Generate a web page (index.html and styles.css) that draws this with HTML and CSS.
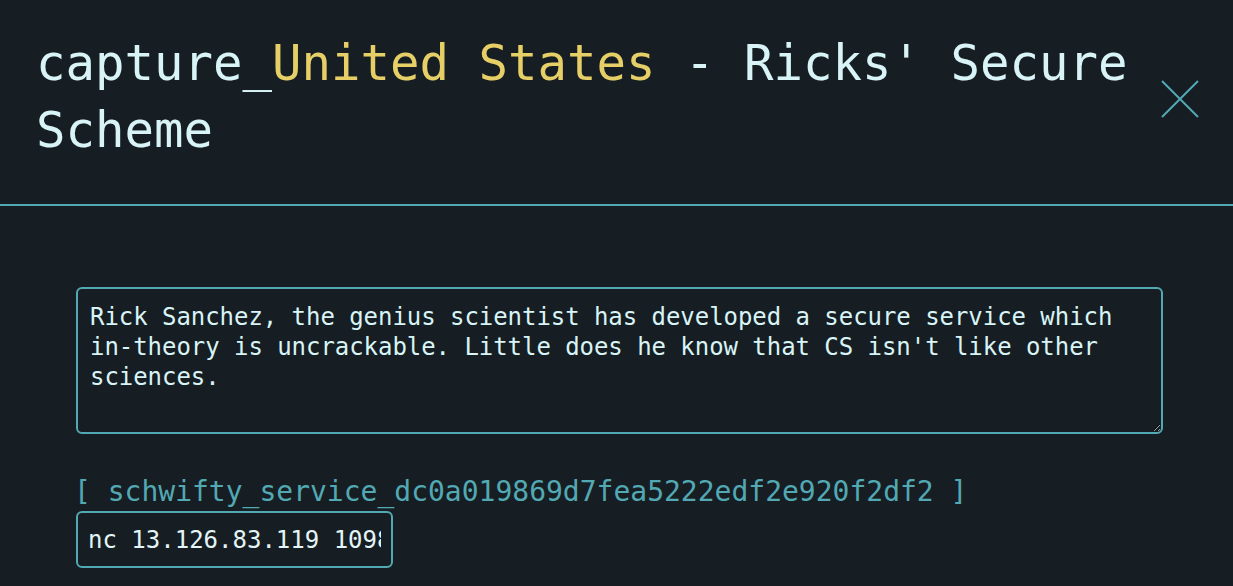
FILE: index.html
```html
<!DOCTYPE html>
<html>
<head>
<meta charset="utf-8">
<link rel="stylesheet" href="styles.css">
</head>
<body>
<div class="modal">
  <header class="modal-header">
    <h1 class="title">capture_<span class="country">United States</span> - Ricks' Secure Scheme</h1>
    <button class="close" aria-label="Close">
      <svg width="38" height="38" viewBox="0 0 38 38"><path d="M1 1 L37 37 M37 1 L1 37" stroke="#52a9b4" stroke-width="2" fill="none"/></svg>
    </button>
  </header>
  <section class="modal-body">
    <textarea class="desc" readonly>Rick Sanchez, the genius scientist has developed a secure service which in-theory is uncrackable. Little does he know that CS isn't like other sciences.</textarea>
    <div class="service">[ schwifty_service_dc0a019869d7fea5222edf2e920f2df2 ]</div>
    <input class="conn" type="text" readonly value="nc 13.126.83.119 10985">
  </section>
</div>
</body>
</html>
```
FILE: styles.css
```css
html, body {
  margin: 0;
  padding: 0;
  background: #171e23;
}
.modal {
  font-family: "DejaVu Sans Mono", "Liberation Mono", monospace;
  color: #d8f4f6;
  min-height: 586px;
}
.modal-header {
  display: flex;
  align-items: center;
  justify-content: space-between;
  padding: 30px 34px 40px 36px;
  border-bottom: 2px solid #52a9b4;
}
.title {
  margin: 0;
  font-size: 49px;
  font-weight: normal;
  line-height: 67px;
  max-width: 1115px;
}
.country {
  color: #e6cf67;
}
.close {
  background: none;
  border: none;
  padding: 0;
  width: 38px;
  height: 38px;
  margin-top: 4px;
  cursor: pointer;
}
.close svg {
  display: block;
}
.modal-body {
  display: flex;
  flex-direction: column;
  align-items: flex-start;
  padding: 81px 70px 0 76px;
}
.desc {
  box-sizing: border-box;
  width: 100%;
  height: 147px;
  background: transparent;
  color: #d8f4f6;
  border: 2px solid #52a9b4;
  border-radius: 6px;
  padding: 13px 12px 12px;
  font-family: "DejaVu Sans Mono", "Liberation Mono", monospace;
  font-size: 24px;
  line-height: 30px;
  outline: none;
  letter-spacing: -0.05px;
}
.service {
  margin-top: 40px;
  margin-left: -2px;
  font-size: 28px;
  line-height: 36px;
  color: #52a9b4;
}
.conn {
  box-sizing: border-box;
  margin-top: 1px;
  width: 317px;
  height: 57px;
  background: transparent;
  color: #e3f5f7;
  border: 2px solid #52a9b4;
  border-radius: 6px;
  padding: 0 10px;
  font-family: "DejaVu Sans Mono", "Liberation Mono", monospace;
  font-size: 24px;
  outline: none;
}
```
